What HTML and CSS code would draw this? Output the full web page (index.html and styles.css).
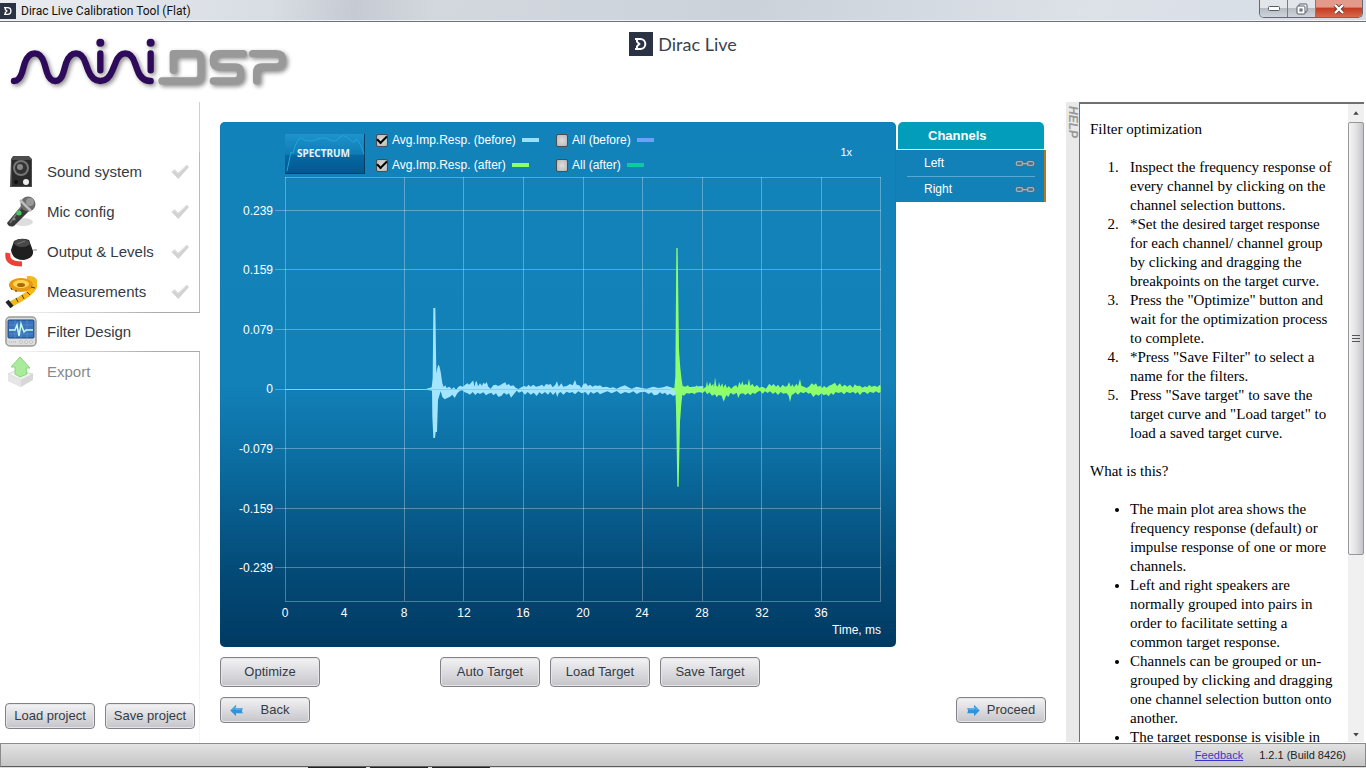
FILE: index.html
```html
<!DOCTYPE html>
<html lang="en">
<head>
    <meta charset="UTF-8">
    <meta name="viewport" content="width=device-width, initial-scale=1.0">
    <title>Dirac Live Calibration Tool (Flat)</title>
    <link rel="stylesheet" href="styles.css">
</head>
<body>
    <!-- Shared symbols -->
    <svg class="symbols" aria-hidden="true">
        <symbol id="dirac" viewBox="0 0 72 72">
            <rect width="72" height="72" fill="#2b3243"/>
            <path d="M18 21H34A15 15 0 0 1 34 51H18M24 21V29L31 36L24 43V51" fill="none" stroke="#fff" stroke-width="6"/>
        </symbol>
        <symbol id="check" viewBox="0 0 54 48">
            <path d="M1 23L11 16L21 26L47 2L54 9L22 45Z" fill="#d2d2d2"/>
            <path d="M4 23L11 19L21 29L47 5" fill="none" stroke="#e6e6e6" stroke-width="3"/>
        </symbol>
        <symbol id="chain" viewBox="0 0 60 21">
            <g fill="none" stroke="#4b6c80" stroke-width="8">
                <rect x="4" y="5" width="19" height="11" rx="5"/>
                <rect x="37" y="5" width="19" height="11" rx="5"/>
                <path d="M20 11H40"/>
            </g>
            <g fill="none" stroke="#a8b0b4" stroke-width="4">
                <rect x="4" y="5" width="19" height="11" rx="5"/>
                <rect x="37" y="5" width="19" height="11" rx="5"/>
                <path d="M20 11H40"/>
            </g>
        </symbol>
        <symbol id="arrow" viewBox="0 0 42 38">
            <path d="M1 19L18 2V12H39Q33 19 39 27H18V36Z" fill="#2d95e0"/>
            <path d="M8 17L17 8V15H34" fill="none" stroke="#62b9f0" stroke-width="3"/>
        </symbol>
    </svg>

    <!-- Window title -->
    <div class="titlebar">
        <svg class="app-icon" aria-hidden="true"><use href="#dirac"/></svg>
        <span class="window-title">Dirac Live Calibration Tool (Flat)</span>
        <div class="window-buttons">
            <button type="button" class="win-btn" aria-label="Minimize">
                <svg viewBox="0 0 12 5" width="12" height="5"><rect x=".5" y=".5" width="11" height="4" rx="1" fill="#fff" stroke="#555b66"/></svg>
            </button>
            <button type="button" class="win-btn" aria-label="Restore">
                <svg viewBox="0 0 12 12" width="12" height="12">
                    <rect x="3" y="1" width="8" height="8" rx="1" fill="#fff" stroke="#555b66"/>
                    <rect x="1" y="3" width="8" height="8" rx="1" fill="#fff" stroke="#555b66"/>
                    <rect x="4" y="6" width="2" height="2" fill="#ccc" stroke="#555b66"/>
                </svg>
            </button>
            <button type="button" class="win-btn close" aria-label="Close">
                <svg viewBox="0 0 12 10" width="12" height="10">
                    <path d="M2 1L10 9M10 1L2 9" stroke="#5a3b3b" stroke-width="4"/>
                    <path d="M2 1L10 9M10 1L2 9" stroke="#fff" stroke-width="2.4"/>
                </svg>
            </button>
        </div>
    </div>

    <!-- Header -->
    <header class="header">
        <svg class="mini-logo" viewBox="0 0 300 80" role="img" aria-label="miniDSP">
            <g transform="translate(0 -22) scale(.3333)" fill="none" stroke-linecap="round" stroke-linejoin="round">
                <g stroke="#999" stroke-width="22">
                    <path d="M520 211V161H586Q603 161 603 178V226Q603 243 586 243H486"/>
                    <path d="M730 161H657Q640 161 640 178V184Q640 201 657 201H704Q722 201 722 218V226Q722 243 704 243H640"/>
                    <path d="M758 161H828Q848 161 848 181T828 201H786Q770 201 770 218V243"/>
                </g>
                <g stroke="#2e0a5a" stroke-width="19">
                    <path d="M42 243Q58 243 66 218L74 190Q84 160 104 160Q124 160 133 190L141 218Q149 243 166 243Q183 243 190 218L198 190Q208 160 228 160Q248 160 257 190L265 212Q277 243 301 243Q325 243 337 212L346 190Q356 160 376 160Q396 160 405 190L413 212Q424 243 452 243"/>
                    <path d="M301 160V211M452 160V211"/>
                </g>
                <g fill="#2e0a5a">
                    <circle cx="301" cy="128" r="12"/>
                    <circle cx="452" cy="128" r="12"/>
                </g>
            </g>
        </svg>
        <div class="brand">
            <svg class="brand-icon" aria-hidden="true"><use href="#dirac"/></svg>
            <span>Dirac Live</span>
        </div>
    </header>

    <div class="layout">
        <!-- Steps -->
        <aside class="sidebar">
            <nav class="steps">
                <a href="#sound" class="step">
                    <svg class="step-icon" viewBox="0 0 32 32">
                        <path d="M6 3L8 0H24L27 3V31H5Z" fill="#4d4d4d"/>
                        <path d="M7 4H26V30H7Z" fill="#2b2b2b"/>
                        <circle cx="16" cy="12" r="8" fill="#777"/>
                        <circle cx="16" cy="12" r="6" fill="#333"/>
                        <circle cx="15" cy="11" r="3" fill="#888"/>
                        <circle cx="11" cy="26" r="2" fill="#111"/>
                        <circle cx="21" cy="26" r="3" fill="#eee"/>
                    </svg>
                    <span>Sound system</span>
                    <svg class="step-check"><use href="#check"/></svg>
                </a>
                <a href="#mic" class="step">
                    <svg class="step-icon" viewBox="0 0 32 32">
                        <ellipse cx="18" cy="26" rx="10" ry="4" fill="#ddd"/>
                        <path d="M17 9L24 15L9 30Q4 32 2 27Z" fill="#3a3a3a"/>
                        <path d="M17 10L5 27" stroke="#777" stroke-width="1.5"/>
                        <circle cx="23" cy="8" r="7.5" fill="#6b6b6b"/>
                        <path d="M15 4L26 15" stroke="#bbb" stroke-width="2.5"/>
                        <circle cx="25" cy="6" r="4" fill="#999"/>
                        <circle cx="14" cy="17" r="2.5" fill="#3ecb55"/>
                        <circle cx="9" cy="23" r="1.5" fill="#888"/>
                    </svg>
                    <span>Mic config</span>
                    <svg class="step-check"><use href="#check"/></svg>
                </a>
                <a href="#output" class="step">
                    <svg class="step-icon" viewBox="0 0 32 32">
                        <path d="M3 17Q1 28 17 28" fill="none" stroke="#ee4035" stroke-width="5"/>
                        <path d="M6 14L9 5Q16 1 24 4L28 15Q29 22 19 24Q7 24 6 14Z" fill="#1f1f1f"/>
                        <ellipse cx="17" cy="7" rx="8" ry="4" fill="#484848"/>
                        <path d="M12 8L20 5" stroke="#777"/>
                        <path d="M28 14H32" stroke="#888"/>
                    </svg>
                    <span>Output &amp; Levels</span>
                    <svg class="step-check"><use href="#check"/></svg>
                </a>
                <a href="#measure" class="step">
                    <svg class="step-icon" viewBox="0 0 32 32">
                        <path d="M22 3Q32 2 29 11Q25 19 4 29" fill="none" stroke="#f2b91f" stroke-width="6"/>
                        <ellipse cx="16" cy="9" rx="12" ry="7" fill="#e59a14"/>
                        <ellipse cx="16" cy="8" rx="8" ry="4" fill="#ffd253"/>
                        <ellipse cx="16" cy="9" rx="4" ry="2" fill="#a86809"/>
                        <path d="M2 25L7 31" stroke="#222" stroke-width="4"/>
                        <path d="M11 22L13 26M17 19L19 23M22 16L25 19M26 11L30 12M6 12L7 14M11 14V16" stroke="#4a3606"/>
                    </svg>
                    <span>Measurements</span>
                    <svg class="step-check"><use href="#check"/></svg>
                </a>
                <a href="#filter" class="step active" aria-current="page">
                    <svg class="step-icon" viewBox="0 0 32 32">
                        <rect x="1" y="1" width="30" height="29" rx="4" fill="#dedede" stroke="#9b9b94" stroke-width="1.5"/>
                        <rect x="3" y="4" width="26" height="18" rx="1" fill="#3a74bd" stroke="#174480"/>
                        <path d="M4 9H28M4 14H28M4 18H28M10 4V22M16 4V22M22 4V22" stroke="#5e94d2" stroke-width=".6"/>
                        <path d="M4 14H10L12 9L14 20L16 8L19 16L21 14H28" fill="none" stroke="#c9fbe4" stroke-width="1.5"/>
                        <path d="M4 26H12" stroke="#aaa" stroke-dasharray="1 1"/>
                        <g fill="#eee" stroke="#aaa" stroke-width=".6"><circle cx="16" cy="26" r="1.5"/><circle cx="21" cy="26" r="1.5"/><circle cx="26" cy="26" r="1.5"/></g>
                    </svg>
                    <span>Filter Design</span>
                </a>
                <a href="#export" class="step disabled">
                    <svg class="step-icon" viewBox="0 0 32 32">
                        <path d="M3 18L12 14L28 18V24L16 31L3 25Z" fill="#d7d7d7"/>
                        <path d="M3 18L12 14L28 18L16 24Z" fill="#f1f1f1" stroke="#ccc" stroke-width=".6"/>
                        <path d="M3 18L16 24V31L3 25Z" fill="#e5e5e5"/>
                        <path d="M15 1L25 12H21L22 18L15 21L10 18V11H6Z" fill="#a9eb9b" stroke="#8bd67d"/>
                    </svg>
                    <span>Export</span>
                </a>
            </nav>
            <div class="sidebar-rest">
                <div class="project-buttons">
                    <button type="button" class="btn small">Load project</button>
                    <button type="button" class="btn small">Save project</button>
                </div>
            </div>
        </aside>

        <!-- Main Content -->
        <main class="main">
            <div class="workspace">
                <section class="chart">
                    <div class="chart-head">
                        <button type="button" class="spectrum">
                            <svg class="spectrum-curve" viewBox="0 0 80 40" preserveAspectRatio="none" aria-hidden="true">
                                <path d="M2 37L6 18L8 19Q12 4 16 4Q21 8 27 7Q32 5 36 4T45 6T54 4T64 5T71 5Q76 9 79 20" fill="none" stroke="#1ea7d8"/>
                            </svg>
                            <span>SPECTRUM</span>
                        </button>
                        <div class="legend">
                            <label class="legend-item"><input type="checkbox" checked>Avg.Imp.Resp. (before)<i class="swatch before"></i></label>
                            <label class="legend-item"><input type="checkbox">All (before)<i class="swatch all-before"></i></label>
                            <label class="legend-item"><input type="checkbox" checked>Avg.Imp.Resp. (after)<i class="swatch after"></i></label>
                            <label class="legend-item"><input type="checkbox">All (after)<i class="swatch all-after"></i></label>
                        </div>
                        <span class="zoom">1x</span>
                    </div>
                    <svg class="plot" viewBox="0 0 676 470">
                        <!-- Grid -->
                        <g class="grid">
                            <path d="M65.5 0V424M184.5 0V424M243.5 0V424M303.5 0V424M363.5 0V424M422.5 0V424M482.5 0V424M541.5 0V424M601.5 0V424M660.5 0V424"/>
                            <path d="M65 .5H661M55 33.5H661M55 92.5H661M55 152.5H661M55 212.5H65M55 271.5H661M55 331.5H661M55 390.5H661M65 424.5H661"/>
                        </g>
                        <g class="axis-y">
                            <text x="53" y="38">0.239</text>
                            <text x="53" y="97">0.159</text>
                            <text x="53" y="157">0.079</text>
                            <text x="53" y="216">0</text>
                            <text x="53" y="276">-0.079</text>
                            <text x="53" y="336">-0.159</text>
                            <text x="53" y="395">-0.239</text>
                            <text x="661" y="457">Time, ms</text>
                        </g>
                        <g class="axis-x">
                            <text x="65" y="440">0</text>
                            <text x="124" y="440">4</text>
                            <text x="184" y="440">8</text>
                            <text x="244" y="440">12</text>
                            <text x="303" y="440">16</text>
                            <text x="363" y="440">20</text>
                            <text x="422" y="440">24</text>
                            <text x="482" y="440">28</text>
                            <text x="542" y="440">32</text>
                            <text x="601" y="440">36</text>
                        </g>
                        <!-- Impulse before -->
                        <svg x="190" y="63" width="300" height="260" viewBox="0 0 900 780">
                            <path class="wave-before" d="M50 446L65 442L68 415L70 204H76L79 400L82 385L85 374L88 378L92 395L97 430L101 441L106 436L110 444L118 440L125 447L132 442L138 450L144 442L150 437L158 440L165 435L172 430L177 434L182 430L187 424L190 422L193 440L197 425L200 424L204 439L210 430L216 437L220 428L225 432L230 426L235 440L242 446L250 436L258 434L264 438L270 436L280 430L286 427L290 436L296 432L302 438L310 436L318 444L326 447L334 442L342 438L350 440L356 434L362 440L370 434L378 440L388 438L396 434L402 440L408 432L416 434L422 432L428 442L436 434L441 424L446 440L454 430L460 440L470 438L480 432L488 436L495 420L500 434L508 436L514 444L520 432L528 430L534 438L540 434L548 440L556 436L562 438L570 436L578 442L590 440L600 444L610 442L620 446L632 440L645 436L655 442L665 446L680 440L695 444L710 446L730 440L745 444L760 442L770 438L790 444L800 444L880 438V456L800 462L790 468L780 461L772 466L765 458L757 462L750 457L742 464L732 466L724 457L716 462L705 455L690 457L680 462L670 454L658 460L645 456L632 462L620 453L605 460L592 454L580 458L570 463L562 455L550 461L542 455L535 466L526 456L515 460L505 454L495 463L487 456L478 459L470 455L460 464L452 456L446 460L442 471L437 456L429 465L421 455L414 464L405 456L396 463L388 457L380 468L371 458L362 464L353 456L345 464L336 454L327 458L320 452L312 462L303 473L297 460L290 464L282 458L274 468L265 470L258 460L250 466L244 458L235 461L228 466L220 457L210 462L203 458L196 465L188 456L180 464L171 459L164 457L157 451L150 452L142 460L134 474L127 464L120 470L112 474L104 478L97 471L92 454L84 480L81 576H77L75 594H70L67 530L66 452L50 449Z"/>
                        </svg>
                        <path class="baseline" d="M65 212.5H460"/>
                        <!-- Impulse after -->
                        <svg x="400" y="63" width="290" height="260" viewBox="0 0 870 780">
                            <path class="wave-after" d="M150 446L163 444L166 410L169 24H173L177 330L181 385L185 420L188 438L196 440L204 436L209 443L217 440L223 445L230 436L236 444L244 441L250 446L258 440L261 423L264 440L270 426L274 438L280 431L282 442L285 412L289 437L294 440L297 426L301 440L307 430L310 443L316 432L321 445L326 438L334 446L342 438L349 436L353 443L358 426L363 436L367 423L371 436L378 432L383 436L387 416L391 438L397 431L403 441L411 435L418 443L427 440L438 446L448 431L454 438L461 432L468 440L474 434L481 443L488 434L495 440L502 438L507 426L512 440L518 433L522 442L529 431L534 439L540 417L544 437L552 440L560 444L568 439L575 430L582 435L588 430L593 440L601 437L606 445L612 438L620 443L627 437L635 434L645 428L651 439L660 430L666 440L674 434L682 440L690 434L699 443L704 433L711 438L720 437L727 443L735 439L742 442L747 435L755 440L764 437L772 441L779 435L782 438V456L776 459L768 454L760 459L750 455L743 462L734 456L727 457L720 465L713 456L706 461L699 455L690 460L680 455L672 463L664 456L656 459L647 456L640 465L633 459L626 469L619 463L611 466L604 460L596 467L588 463L580 471L572 459L565 461L558 455L550 460L542 456L534 464L526 457L521 462L515 465L510 486L506 467L499 459L490 461L482 456L474 465L466 456L459 462L450 454L443 459L435 454L428 461L420 452L412 456L405 462L398 458L391 466L384 459L376 465L369 460L360 462L355 474L350 458L340 464L332 458L325 471L319 465L311 485L305 467L296 465L290 472L285 463L276 467L268 457L262 463L255 453L247 460L239 454L231 456L223 463L215 457L208 461L200 458L192 467L187 464L184 492L180 545L176 740H172L168 500L166 452L150 449Z"/>
                        </svg>
                    </svg>
                </section>

                <section class="channels">
                    <h2 class="channels-title">Channels</h2>
                    <ul class="channel-list">
                        <li><button type="button" class="channel">Left<svg class="chain"><use href="#chain"/></svg></button></li>
                        <li><button type="button" class="channel">Right<svg class="chain"><use href="#chain"/></svg></button></li>
                    </ul>
                </section>
            </div>

            <div class="actions">
                <button type="button" class="btn">Optimize</button>
                <div class="target-actions">
                    <button type="button" class="btn">Auto Target</button>
                    <button type="button" class="btn">Load Target</button>
                    <button type="button" class="btn">Save Target</button>
                </div>
            </div>
            <div class="pager">
                <button type="button" class="btn small paged"><svg class="arrow"><use href="#arrow"/></svg><span>Back</span></button>
                <button type="button" class="btn small paged"><svg class="arrow next"><use href="#arrow"/></svg><span>Proceed</span></button>
            </div>
        </main>

        <!-- Help -->
        <aside class="help">
            <div class="help-tab"><span>HELP</span></div>
            <div class="help-panel">
                <div class="help-text">
                    <p>Filter optimization</p>
                    <ol>
                        <li>Inspect the frequency response of every channel by clicking on the channel selection buttons.</li>
                        <li>*Set the desired target response for each channel/ channel group by clicking and dragging the breakpoints on the target curve.</li>
                        <li>Press the "Optimize" button and wait for the optimization process to complete.</li>
                        <li>*Press "Save Filter" to select a name for the filters.</li>
                        <li>Press "Save target" to save the target curve and "Load target" to load a saved target curve.</li>
                    </ol>
                    <p>What is this?</p>
                    <ul>
                        <li>The main plot area shows the frequency response (default) or impulse response of one or more channels.</li>
                        <li>Left and right speakers are normally grouped into pairs in order to facilitate setting a common target response.</li>
                        <li>Channels can be grouped or un-grouped by clicking and dragging one channel selection button onto another.</li>
                        <li>The target response is visible in</li>
                    </ul>
                </div>
                <div class="scrollbar" aria-hidden="true">
                    <svg class="scroll-arrow" viewBox="0 0 16 20"><path d="M5 12L8 8L11 12Z" fill="#444"/></svg>
                    <div class="scroll-track">
                        <div class="scroll-thumb"><i></i><i></i><i></i></div>
                    </div>
                    <svg class="scroll-arrow" viewBox="0 0 16 20"><path d="M5 10L8 14L11 10Z" fill="#444"/></svg>
                </div>
            </div>
        </aside>
    </div>

    <!-- Status bar -->
    <footer class="statusbar">
        <a href="#feedback">Feedback</a>
        <span>1.2.1 (Build 8426)</span>
    </footer>
    <div class="desk-edge"><i></i><i></i><i></i></div>
</body>
</html>
```
FILE: styles.css
```css
/* General Styles */
* {
    box-sizing: border-box;
}

body {
    display: flex;
    flex-direction: column;
    height: 100vh;
    margin: 0;
    background-color: #fff;
    color: #343b42;
    font-family: "Liberation Sans", Arial, sans-serif;
    font-size: 13px;
    overflow: hidden;
}

button {
    font-family: inherit;
    cursor: pointer;
}

.symbols {
    position: absolute;
    width: 0;
    height: 0;
}

/* Window title */
.titlebar {
    display: flex;
    align-items: center;
    height: 22px;
    border-bottom: 1px solid #6c7178;
    background: linear-gradient(100deg, #e9ecf0 0, #d8dde4 20%, #c6cbd3 26%, #d3d8df 32%, #ccd2da 55%, #dde2e9 80%, #d6dce5 100%);
    box-shadow: inset 0 -1px #f2f4f6;
    flex: none;
}

.app-icon {
    width: 16px;
    height: 16px;
}

.window-title {
    margin-left: 5px;
    color: #111;
    font-family: Roboto, sans-serif;
    font-size: 12px;
}

.window-buttons {
    display: flex;
    align-self: flex-start;
    height: 18px;
    margin-left: auto;
    margin-right: 3px;
    border: 1px solid #636871;
    border-top: 0;
    border-radius: 0 0 5px 5px;
    overflow: hidden;
}

.win-btn {
    display: flex;
    align-items: center;
    justify-content: center;
    width: 28px;
    padding: 0;
    border: 0;
    border-right: 1px solid #777c85;
    background: linear-gradient(#e2e5ea 45%, #b7bcc4 50%, #d0d4da);
}

.win-btn.close {
    width: 46px;
    border-right: 0;
    background: linear-gradient(#e39a8a 40%, #c43c22 50%, #d8694c);
}

/* Header */
.header {
    display: grid;
    grid-template-columns: 1fr auto 1fr;
    height: 80px;
    flex: none;
}

.mini-logo {
    width: 300px;
    height: 80px;
    filter: drop-shadow(2px 2px 2px rgba(0, 0, 0, 0.45));
}

.brand {
    display: flex;
    align-items: center;
    gap: 5px;
    height: 44px;
    color: #3c424c;
    font-family: Lato, sans-serif;
    font-size: 18px;
}

.brand-icon {
    width: 24px;
    height: 24px;
}

.layout {
    display: flex;
    flex: 1;
    min-height: 0;
}

/* Steps */
.sidebar {
    display: flex;
    flex-direction: column;
    width: 200px;
    flex: none;
}

.steps {
    display: flex;
    flex-direction: column;
}

.steps::before {
    content: "";
    height: 50px;
    border-right: 1px solid #b4dbe3;
}

.step {
    display: flex;
    align-items: center;
    gap: 10px;
    height: 40px;
    padding: 0 10px 0 5px;
    border-right: 1px solid #b5bcbf;
    color: #343b42;
    font-size: 15px;
    text-decoration: none;
}

.step span {
    padding-bottom: 2px;
}

.step.active {
    border: solid transparent;
    border-width: 1px 0;
    border-image: linear-gradient(90deg, #fff, #aaa 80%) 1;
}

.step.disabled {
    color: #868a8d;
}

.step-icon {
    width: 32px;
    height: 32px;
}

.step-check {
    width: 18px;
    height: 16px;
    margin-left: auto;
}

.sidebar-rest {
    display: flex;
    flex: 1;
    align-items: flex-end;
    padding: 0 4px 14px 5px;
    border-right: 1px solid;
    border-image: linear-gradient(#b5b5b5, #c4dfe4 40%, #f4f7f8 90%) 1;
}

.project-buttons {
    display: flex;
    flex: 1;
    justify-content: space-between;
}

.btn {
    width: 100px;
    height: 30px;
    padding: 0 0 2px;
    border: 1px solid #808287;
    border-radius: 4px;
    background: linear-gradient(#f3f3f4, #dcdce0 50%, #c4c4ca);
    box-shadow: inset 0 0 0 1px #e6e6e8;
    color: #343b42;
    font-size: 13px;
}

.btn.small {
    width: 90px;
    height: 26px;
}

/* Main Content */
.main {
    flex: 1;
    min-width: 0;
    padding: 20px 20px 0;
}

.workspace {
    display: flex;
    align-items: flex-start;
}

.chart {
    flex: 1;
    min-width: 0;
    border-radius: 5px;
    background: linear-gradient(#1283ba 0, #1281b8 50%, #0b6ca0 65%, #044b78 85%, #003a62 100%);
    box-shadow: inset 0 0 1px #064f7d;
}

.chart-head {
    display: flex;
    height: 55px;
    padding: 8px 44px 0 65px;
}

.spectrum {
    position: relative;
    width: 80px;
    height: 40px;
    margin: 4px 11px 0 0;
    padding: 0 2px 2px 0;
    border: solid #083d66;
    border-width: 0 1px 1px 0;
    background: linear-gradient(#1e93cd, #0f7cb4 52%, #0569a3 54%, #045790);
    color: #e6f3fa;
    font-family: "Noto Sans", sans-serif;
    font-size: 10px;
    font-weight: bold;
}

.spectrum-curve {
    position: absolute;
    inset: 0;
    width: 80px;
    height: 40px;
}

.legend {
    display: grid;
    grid-template-columns: 180px auto;
    grid-template-rows: 20px 20px;
    row-gap: 5px;
}

.legend-item {
    display: flex;
    align-items: center;
    color: #fff;
    font-size: 12px;
    white-space: nowrap;
}

.legend-item input {
    display: grid;
    place-content: center;
    appearance: none;
    width: 12px;
    height: 13px;
    margin: 0 4px 0 0;
    border: 1px solid #4d4d4d;
    border-radius: 2px;
    background: radial-gradient(#dedede, #b5b5b5);
}

.legend-item input:checked::before {
    content: "";
    width: 8px;
    height: 4px;
    border: solid #000;
    border-width: 0 0 2px 2px;
    transform: rotate(-45deg) translate(1px, -1px);
}

.swatch {
    width: 17px;
    height: 4px;
    margin-left: 6px;
}

.swatch.before { background-color: #99e0fb; }
.swatch.after { background-color: #8cff6d; }
.swatch.all-before { background-color: #6ea0fb; }
.swatch.all-after { background-color: #0bcba2; }

.zoom {
    margin: 16px 0 0 auto;
    color: #fff;
    font-size: 11px;
}

.plot {
    display: block;
    width: 100%;
    fill: #fff;
    font-size: 12px;
}

.grid {
    fill: none;
    stroke: rgba(255, 255, 255, 0.3);
}

.axis-y { text-anchor: end; }
.axis-x { text-anchor: middle; }
.wave-before { fill: #a3e4ff; }
.wave-after { fill: #8dff6e; }

.baseline {
    stroke: #84e86f;
}

/* Channels */
.channels {
    width: 150px;
    flex: none;
}

.channels-title {
    height: 27px;
    margin: 0 2px 1px;
    padding-left: 30px;
    border-radius: 5px 5px 0 0;
    background-color: #029dba;
    color: #fff;
    font-size: 13px;
    line-height: 27px;
}

.channel-list {
    margin: 0;
    padding: 0 9px 0 11px;
    border-right: 2px solid #bd741c;
    background-color: #1281b8;
    list-style: none;
}

.channel-list li + li {
    border-top: 1px solid #58a8d0;
}

.channel {
    display: flex;
    align-items: center;
    justify-content: space-between;
    width: 100%;
    height: 26px;
    padding: 0 0 0 17px;
    border: 0;
    background: none;
    color: #fff;
    font-size: 12px;
}

.channel-list li + li .channel {
    height: 25px;
    padding-bottom: 1px;
}

.chain {
    width: 20px;
    height: 7px;
}

.actions {
    display: flex;
    justify-content: space-between;
    margin: 10px 286px 10px 0;
}

.target-actions {
    display: flex;
    gap: 10px;
}

.pager {
    display: flex;
    justify-content: space-between;
}

.paged {
    display: flex;
    align-items: center;
    padding: 0 9px;
}

.paged span {
    flex: 1;
    padding: 0 0 2px 6px;
    text-align: center;
}

.arrow {
    width: 14px;
    height: 13px;
    flex: none;
}

.arrow.next {
    transform: scaleX(-1);
}

/* Help */
.help {
    display: flex;
    width: 300px;
    padding: 0 2px 1px 0;
    flex: none;
}

.help-tab {
    width: 13px;
    padding-top: 4px;
    background-color: #e9e9e9;
    color: #999;
    font-size: 12px;
    font-style: italic;
    font-weight: bold;
    line-height: 13px;
    writing-mode: vertical-rl;
}

.help-panel {
    display: flex;
    flex: 1;
    border: solid #707070;
    border-width: 2px 0 0 1px;
}

.help-text {
    flex: 1;
    padding: 0 10px;
    color: #000;
    font-family: "Liberation Serif", "Times New Roman", serif;
    font-size: 15px;
    line-height: 19px;
    overflow: hidden;
}

.help-text p,
.help-text ol,
.help-text ul {
    margin: 19px 0;
}

.help-text p:first-child {
    margin-top: 16px;
}

.help-text ol,
.help-text ul {
    padding-left: 40px;
}

.help-text ol li::marker {
    content: counter(list-item) ".\00a0\00a0\00a0";
}

.scrollbar {
    display: flex;
    flex-direction: column;
    width: 16px;
    background-color: #f0f0f0;
}

.scroll-arrow {
    width: 16px;
    height: 18px;
}

.scroll-track {
    flex: 1;
}

.scroll-thumb {
    display: flex;
    flex-direction: column;
    align-items: center;
    justify-content: center;
    gap: 1px;
    height: 72%;
    border: 1px solid #979797;
    border-radius: 2px;
    background: linear-gradient(90deg, #f5f5f5, #e2e2e4 50%, #c4c5c9);
}

.scroll-thumb i {
    width: 8px;
    height: 2px;
    border-top: 1px solid #555;
}

/* Status bar */
.statusbar {
    display: flex;
    align-items: center;
    justify-content: flex-end;
    gap: 16px;
    height: 24px;
    padding-right: 19px;
    border: 1px solid #8b8b8b;
    border-bottom-color: #5c5c5c;
    background: linear-gradient(#e2e2e2, #c6c6c6);
    color: #222;
    font-size: 11px;
    flex: none;
}

.statusbar a {
    color: #3a35cc;
}

.desk-edge {
    display: flex;
    gap: 4px;
    height: 1px;
    padding-left: 308px;
    background-color: #ddd;
    flex: none;
}

.desk-edge i {
    width: 58px;
    background-color: #222;
}
```
